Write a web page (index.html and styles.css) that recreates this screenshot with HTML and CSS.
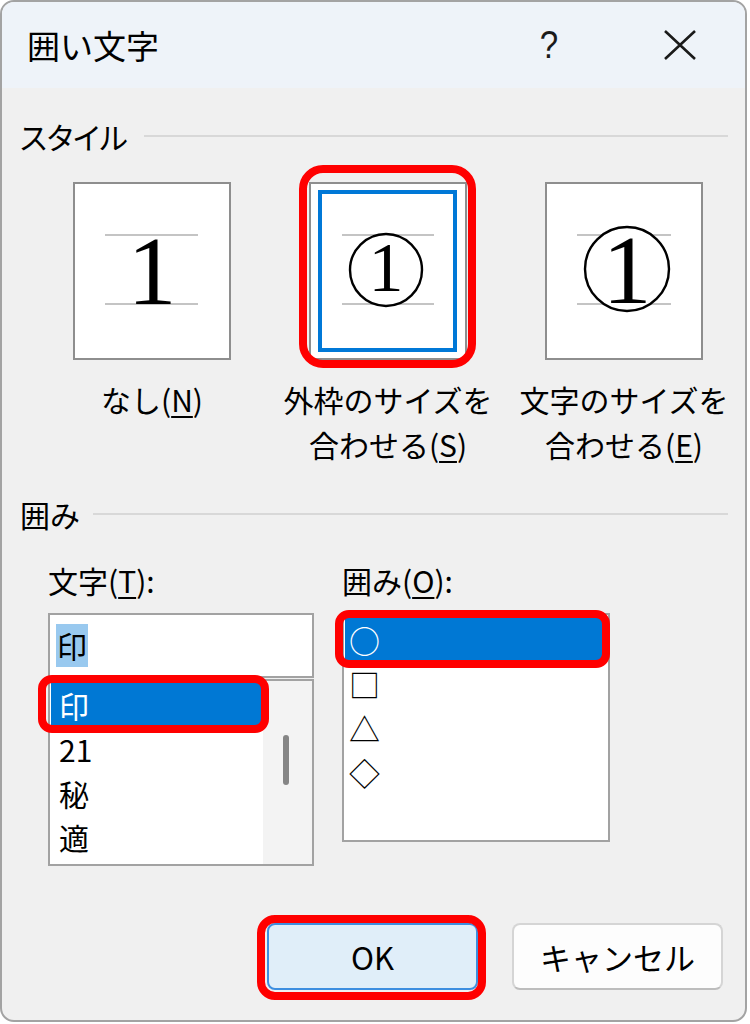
FILE: index.html
```html
<!DOCTYPE html>
<html lang="ja">
<head>
<meta charset="utf-8">
<title>囲い文字</title>
<link rel="stylesheet" href="styles.css">
</head>
<body>
<div class="window">
  <div class="titlebar">
    <span class="title">囲い文字</span>
    <span class="help">?</span>
    <span class="close">
      <svg width="34" height="30" viewBox="0 0 34 30"><path d="M2 1 L32 29 M32 1 L2 29" stroke="#1a1a1a" stroke-width="2.6" fill="none"/></svg>
    </span>
  </div>
  <div class="content">
    <div class="group-head"><span class="group-name">スタイル</span><div class="rule"></div></div>
    <div class="styles">
      <div class="opt">
        <div class="preview">
          <svg width="154" height="174" viewBox="0 0 154 174">
            <path d="M30 51 H123 M30 120 H123" stroke="#c4c4c4" stroke-width="2"/>
            <text x="77" y="120" text-anchor="middle" class="digit" font-size="98">1</text>
          </svg>
        </div>
        <div class="opt-label">なし(<u>N</u>)</div>
      </div>
      <div class="opt">
        <div class="preview ring ring-preview">
          <svg width="154" height="174" viewBox="0 0 154 174">
            <rect x="9" y="8" width="135" height="158" fill="none" stroke="#0078d7" stroke-width="4"/>
            <path d="M31 51 H123 M31 120 H123" stroke="#c4c4c4" stroke-width="2"/>
            <circle cx="75" cy="86" r="36" fill="#fff" stroke="#000" stroke-width="2.4"/>
            <text x="75" y="107" text-anchor="middle" class="digit" font-size="70">1</text>
          </svg>
        </div>
        <div class="opt-label">外枠のサイズを<br>合わせる(<u>S</u>)</div>
      </div>
      <div class="opt">
        <div class="preview">
          <svg width="154" height="174" viewBox="0 0 154 174">
            <path d="M30 51 H124 M30 120 H124" stroke="#c4c4c4" stroke-width="2"/>
            <circle cx="80" cy="85" r="42" fill="#fff" stroke="#000" stroke-width="2.4"/>
            <text x="80" y="119" text-anchor="middle" class="digit" font-size="98">1</text>
          </svg>
        </div>
        <div class="opt-label">文字のサイズを<br>合わせる(<u>E</u>)</div>
      </div>
    </div>

    <div class="group-head group-head-2"><span class="group-name">囲み</span><div class="rule"></div></div>

    <div class="enclose">
      <div class="col col-text">
        <div class="field-label">文字(<u>T</u>):</div>
        <div class="textbox"><span class="sel-text">印</span></div>
        <div class="listbox list-text">
          <div class="items">
            <div class="row selected ring ring-row1">印</div>
            <div class="row">21</div>
            <div class="row">秘</div>
            <div class="row">適</div>
          </div>
          <div class="scrollbar"><div class="thumb"></div></div>
        </div>
      </div>
      <div class="col col-shape">
        <div class="field-label">囲み(<u>O</u>):</div>
        <div class="listbox list-shape">
          <div class="row selected ring ring-row2">○</div>
          <div class="row">□</div>
          <div class="row">△</div>
          <div class="row">◇</div>
        </div>
      </div>
    </div>

    <div class="buttons">
      <button class="btn btn-ok ring ring-ok">OK</button>
      <button class="btn btn-cancel">キャンセル</button>
    </div>
  </div>
</div>
</body>
</html>
```

FILE: styles.css
```css
* { box-sizing: border-box; }

body {
  margin: 0;
  background: #ffffff;
  font-family: "Noto Sans CJK JP", "Noto Sans", sans-serif;
  color: #000;
}

u { text-decoration-thickness: 2px; text-underline-offset: 4px; }

.window {
  width: 747px;
  height: 1022px;
  border: 2px solid #a3a3a3;
  border-radius: 14px;
  overflow: hidden;
  background: #f0f0f0;
  display: flex;
  flex-direction: column;
}

.titlebar {
  height: 86px;
  flex: none;
  background: #eef3f9;
  display: flex;
  align-items: center;
  padding: 0 48px 0 25px;
}

.title { font-size: 33px; line-height: 40px; }

.help {
  margin-left: auto;
  width: 40px;
  text-align: center;
  font-family: "Liberation Sans", sans-serif;
  font-size: 39px;
  line-height: 44px;
  color: #1a1a1a;
  transform: scaleX(0.85);
}

.close { margin-left: 94px; display: flex; }

.content {
  flex: 1;
  padding: 32px 17px 0 18px;
}

.group-head {
  display: flex;
  align-items: center;
  height: 32px;
}

.group-name {
  font-size: 30px;
  line-height: 32px;
  white-space: nowrap;
  font-feature-settings: "palt" 1;
}

.rule {
  flex: 1;
  height: 2px;
  background: #d8d8d8;
  margin-left: 16px;
}

.group-head-2 { margin-top: 31px; }
.group-head-2 .rule { margin-left: 14px; }

.styles {
  margin-top: 30px;
  margin-left: 14px;
  display: grid;
  grid-template-columns: repeat(3, 236px);
}

.opt { display: flex; flex-direction: column; align-items: center; }

.preview {
  width: 158px;
  height: 178px;
  border: 2px solid #8e8e8e;
  background: #fff;
}

.preview svg { display: block; }

.digit { font-family: "Liberation Serif", serif; fill: #000; }

.opt-label {
  margin-top: 17px;
  font-size: 30px;
  line-height: 45px;
  text-align: center;
  white-space: nowrap;
}

.enclose {
  margin-top: 32px;
  padding-left: 28px;
  display: flex;
  gap: 28px;
  align-items: flex-start;
}

.col-text { width: 266px; }
.col-shape { width: 268px; }

.field-label {
  font-size: 30px;
  line-height: 36px;
  white-space: nowrap;
}

.textbox {
  margin-top: 15px;
  height: 65px;
  border: 2px solid #a2a2a2;
  background: #fff;
  padding-left: 6px;
  display: flex;
  align-items: center;
}

.sel-text {
  background: #99c9ef;
  font-size: 30px;
  line-height: 43px;
  padding: 0 1px;
}

.listbox {
  border: 2px solid #a2a2a2;
  background: #fff;
}

.list-text {
  margin-top: 1px;
  height: 187px;
  display: flex;
}

.list-text .items {
  flex: 1;
  padding: 2px 0 0 1px;
}

.row {
  height: 44px;
  font-size: 30px;
  line-height: 44px;
  padding-left: 8px;
  white-space: nowrap;
}

.row.selected { background: #0078d4; color: #fff; }

.scrollbar {
  width: 49px;
  background: #f3f3f3;
}

.thumb {
  width: 6px;
  height: 50px;
  margin: 54px 0 0 20px;
  background: #858585;
  border-radius: 3px;
}

.list-shape {
  margin-top: 15px;
  height: 229px;
  padding: 3px 1px 0 1px;
}

.list-shape .row { padding-left: 4px; font-size: 31px; }

.buttons {
  margin-top: 57px;
  display: flex;
  justify-content: flex-end;
  gap: 34px;
  padding-right: 5px;
}

.btn {
  width: 211px;
  height: 67px;
  border-radius: 8px;
  font-family: "Noto Sans CJK JP", "Noto Sans", sans-serif;
  font-size: 31px;
  color: #000;
  padding: 0;
}

.btn-ok {
  background: #e0eef9;
  border: 2px solid #3d8ee0;
}

.btn-cancel {
  background: #fdfdfd;
  border: 2px solid #d5d5d5;
  border-bottom-color: #bdbdbd;
}

/* red annotation rings drawn over the highlighted controls */
.ring { position: relative; }
.ring::after {
  content: "";
  position: absolute;
  border: 8px solid #ff0000;
  border-radius: 20px;
  pointer-events: none;
  z-index: 5;
}
.ring-preview::after { left: -12px; top: -19px; right: -11px; bottom: -10px; border-radius: 24px; }
.ring-row1::after { left: -13px; top: -8px; right: -6px; bottom: -6px; border-radius: 14px; }
.ring-row2::after { left: -10px; top: -8px; right: -3px; bottom: -6px; border-radius: 14px; }
.ring-ok::after { left: -12px; top: -10px; right: -10px; bottom: -12px; border-radius: 18px; }
```
